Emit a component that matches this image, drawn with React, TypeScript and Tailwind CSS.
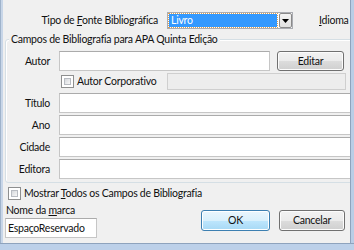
import React from "react";

function Check() {
  return (
    <div className="w-[13px] h-[13px] shrink-0 border border-[#8e8f8f] bg-white p-[2px]">
      <div className="w-full h-full border border-[#b8bcc2] bg-[linear-gradient(135deg,#d6d9dd,#f7f7f7)]" />
    </div>
  );
}

function Label({ children }: { children: React.ReactNode }) {
  return <div className="w-[44px] shrink-0 text-right leading-[15px]">{children}</div>;
}

function Row({ label, first }: { label: string; first?: boolean }) {
  return (
    <div className={first ? "flex items-center mt-[3px] h-[20px]" : "flex items-center mt-[2px] h-[20px]"}>
      <Label>{label}</Label>
      <div className="ml-[9px] w-[300px] h-[20px] shrink-0 border border-[#c6c6c6] border-t-[#ababab] bg-white" />
    </div>
  );
}

export default function App() {
  return (
    <div className="w-[354px] h-[250px] flex flex-col overflow-hidden whitespace-nowrap font-['Lato',sans-serif] text-[10.5px] tracking-[-0.25px] text-[#111]">
      <div className="flex flex-1 min-h-0">
        <div className="w-[3px] shrink-0 bg-[#c8d6e8] border-l border-[#9fb3cb]" />
        <div className="flex-1 min-w-0 overflow-hidden bg-[#f0f0f0] flex flex-col">
          {/* Row 1 */}
          <div className="flex items-center mt-[12px] h-[17px]">
            <div className="w-[155px] shrink-0 text-right leading-[15px]">
              Tipo de <span className="underline">F</span>onte Bibliográfica
            </div>
            <div className="ml-[9px] w-[126px] h-[17px] shrink-0 border border-[#abadb3] bg-white flex">
              <div className="flex-1 mt-[1px] mb-[1px] ml-[1px] bg-[#3399ff] text-white pl-[2px] flex items-center leading-[13px] outline-1 outline-dotted outline-[#e0a050]">
                Livro
              </div>
              <div className="ml-[2px] w-[13px] h-full shrink-0 border border-[#8a8a8a] rounded-[2px] bg-[linear-gradient(#f4f4f4,#e1e1e1)] flex items-center justify-center">
                <svg width="7" height="4" viewBox="0 0 7 4">
                  <path d="M0 0h7L3.5 4z" fill="#000" />
                </svg>
              </div>
            </div>
            <div className="ml-[26px] shrink-0 leading-[15px]">
              <span className="underline">I</span>dioma
            </div>
          </div>

          {/* Group box */}
          <div className="relative mt-[10px] ml-[2px] w-[360px] shrink-0 border border-[#d5dfe5] rounded-[3px] pt-[11px] pb-[3px] shadow-[inset_1px_1px_0_#ffffff]">
            <div className="absolute left-[3px] -top-[8px] bg-[#f0f0f0] px-[2px] leading-[15px]">
              Campos de Bibliografia para APA Quinta Edição
            </div>

            <div className="flex items-center h-[20px]">
              <Label>Autor</Label>
              <div className="ml-[9px] w-[211px] h-[20px] shrink-0 border border-[#c6c6c6] border-t-[#ababab] bg-white" />
              <div className="ml-[7px] w-[67px] h-[20px] shrink-0 border border-[#707070] rounded-[3px] bg-[linear-gradient(#f2f2f2_0%,#ebebeb_50%,#dddddd_50%,#cfcfcf_100%)] shadow-[inset_0_0_0_1px_#fcfcfc] flex items-center justify-center leading-[15px]">
                Editar
              </div>
            </div>

            <div className="flex items-center mt-[2px] h-[17px]">
              <div className="ml-[55px] w-[106px] shrink-0 flex items-center gap-[2px]">
                <Check />
                <div className="leading-[15px] ml-[1px]">Autor Corporativo</div>
              </div>
              <div className="w-[179px] h-[17px] shrink-0 border border-[#cfcfcf] bg-[#ededed]" />
            </div>

            <Row label="Título" first />
            <Row label="Ano" />
            <Row label="Cidade" />
            <Row label="Editora" />
          </div>

          {/* Mostrar */}
          <div className="flex items-center mt-[4px] ml-[5px] h-[13px]">
            <Check />
            <div className="ml-[3px] leading-[15px]">
              Mostrar <span className="underline">T</span>odos os Campos de Bibliografia
            </div>
          </div>

          {/* Bottom */}
          <div className="flex mt-[3px]">
            <div className="ml-[2px] flex flex-col w-[92px] shrink-0">
              <div className="ml-[1px] leading-[15px]">
                Nome da <span className="underline">m</span>arca
              </div>
              <div className="w-[92px] h-[20px] border border-[#c6c6c6] border-t-[#ababab] bg-white flex items-center pl-[2px] leading-[15px]">
                EspaçoReservado
              </div>
            </div>
            <div className="ml-[104px] mt-[7px] w-[69px] h-[21px] shrink-0 border border-[#3c7fb1] rounded-[3px] bg-[linear-gradient(#eaf6fd_0%,#d9f0fc_50%,#bee6fd_50%,#a7d9f5_100%)] shadow-[inset_0_0_0_1px_#ffffff] flex items-center justify-center leading-[15px]">
              OK
            </div>
            <div className="ml-[9px] mt-[7px] w-[66px] h-[21px] shrink-0 border border-[#707070] rounded-[3px] bg-[linear-gradient(#f2f2f2_0%,#ebebeb_50%,#dddddd_50%,#cfcfcf_100%)] shadow-[inset_0_0_0_1px_#fcfcfc] flex items-center justify-center leading-[15px]">
              Cancelar
            </div>
          </div>
        </div>
        <div className="w-[4px] shrink-0 bg-[#b9cde6] border-l border-[#8ea3bd]" />
      </div>
      <div className="h-[7px] shrink-0 bg-[#bcd0e9] border-t border-[#8ea3bd]" />
    </div>
  );
}
